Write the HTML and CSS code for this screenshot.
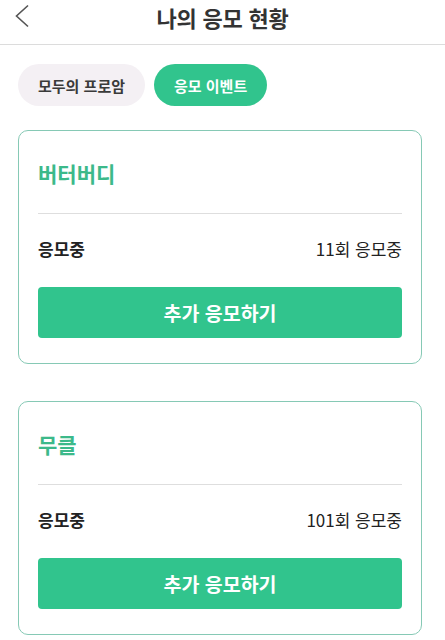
FILE: index.html
```html
<!DOCTYPE html>
<html lang="ko">
<head>
    <meta charset="UTF-8">
    <meta name="viewport" content="width=device-width, initial-scale=1.0">
    <title>나의 응모 현황</title>
    <link rel="stylesheet" href="styles.css">
</head>
<body>
    <!-- Header -->
    <div class="header">
        <a href="#" class="back-button">
            <svg width="16" height="24" viewBox="0 0 16 24">
                <path d="M14 1.5 L2.5 12 L14 22.5" fill="none" stroke="#555" stroke-width="1.6"/>
            </svg>
        </a>
        <h1>나의 응모 현황</h1>
    </div>

    <!-- Tabs -->
    <div class="tabs">
        <button class="tab">모두의 프로암</button>
        <button class="tab active">응모 이벤트</button>
    </div>

    <!-- Event cards -->
    <div class="card-list">
        <div class="card">
            <div class="card-title">버터버디</div>
            <div class="card-row">
                <span class="label">응모중</span>
                <span class="value">11회 응모중</span>
            </div>
            <button class="apply-button">추가 응모하기</button>
        </div>

        <div class="card">
            <div class="card-title">무클</div>
            <div class="card-row">
                <span class="label">응모중</span>
                <span class="value">101회 응모중</span>
            </div>
            <button class="apply-button">추가 응모하기</button>
        </div>
    </div>
</body>
</html>
```

FILE: styles.css
```css
body {
    font-family: "Noto Sans CJK KR", "Noto Sans", sans-serif;
    margin: 0;
    padding: 0;
    background-color: #fff;
    color: #222;
}

/* Header */
.header {
    position: relative;
    height: 44px;
    display: flex;
    align-items: center;
    justify-content: center;
    border-bottom: 1px solid #dcdcdc;
}

.header h1 {
    margin: 0;
    font-size: 22px;
    font-weight: 700;
    color: #333;
    letter-spacing: -0.2px;
    line-height: 34px;
    margin-top: -10px;
}

.back-button {
    position: absolute;
    left: 14px;
    top: 4px;
    display: block;
    line-height: 0;
}

/* Tabs */
.tabs {
    display: flex;
    gap: 9px;
    padding: 19px 18px 0;
}

.tab {
    font-family: inherit;
    height: 42px;
    border: none;
    border-radius: 21px;
    padding: 0 20px;
    font-size: 15px;
    font-weight: 700;
    background-color: #f4f0f4;
    color: #3a3a3a;
}

.tab.active {
    background-color: #31c48d;
    color: #fff;
}

/* Cards */
.card-list {
    display: flex;
    flex-direction: column;
    gap: 37px;
    padding: 24px 23px 0 18px;
}

.card {
    border: 1px solid #86c9b5;
    border-radius: 10px;
    padding: 25px 19px 25px;
}

.card-title {
    font-size: 21px;
    font-weight: 700;
    color: #3cb98a;
    line-height: 34px;
    padding-bottom: 23px;
    border-bottom: 1px solid #dedede;
}

.card-row {
    display: flex;
    justify-content: space-between;
    align-items: center;
    height: 24px;
    margin: 22px 0 27px;
    font-size: 17px;
}

.card-row .label {
    font-weight: 700;
    color: #222;
}

.card-row .value {
    color: #222;
}

.apply-button {
    display: block;
    width: 100%;
    height: 51px;
    border: none;
    border-radius: 4px;
    background-color: #31c48d;
    color: #fff;
    font-family: inherit;
    font-size: 19.5px;
    font-weight: 700;
}
```
